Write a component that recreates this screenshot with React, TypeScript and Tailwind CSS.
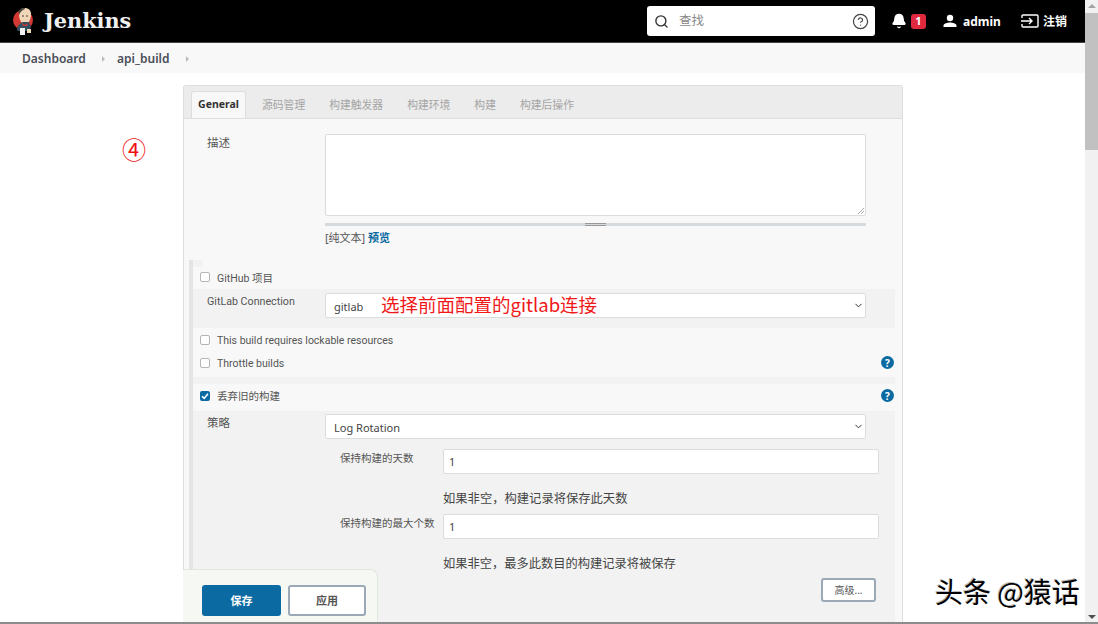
import { Search, CircleHelp, Bell, ChevronDown } from 'lucide-react'

const tabs = ['源码管理', '构建触发器', '构建环境', '构建', '构建后操作']

function HelpDot() {
  return (
    <span className="flex h-[13px] w-[13px] items-center justify-center rounded-full bg-[#0b6aa2] text-[10px] font-bold leading-none text-white">
      ?
    </span>
  )
}

function Check({ checked }: { checked?: boolean }) {
  if (checked) {
    return (
      <span className="-mt-[2px] flex h-[10px] w-[10px] items-center justify-center rounded-[2px] bg-[#0b6aa2]">
        <svg viewBox="0 0 10 10" className="h-[10px] w-[10px]" fill="none" stroke="white" strokeWidth="1.6">
          <path d="M2 5.2 4.2 7.4 8 2.8" />
        </svg>
      </span>
    )
  }
  return <span className="-mt-[2px] block h-[10px] w-[10px] rounded-[2px] border border-[#b5b5b5] bg-white" />
}

function CheckRow({ label, checked, help, className }: { label: string; checked?: boolean; help?: boolean; className: string }) {
  return (
    <div className={`flex items-center pl-[7px] pr-[1px] ${className}`}>
      <Check checked={checked} />
      <span className="ml-[7px] flex-1 pt-[1px] font-['Roboto','Noto_Sans_CJK_SC',sans-serif] text-[10.5px] text-[#555]">{label}</span>
      {help && <span className="-mt-[2px]"><HelpDot /></span>}
    </div>
  )
}

function Select({ value, className }: { value: string; className: string }) {
  return (
    <div className={`flex h-[25px] items-center justify-between rounded-[2px] border border-[#dcdcdc] bg-white pl-2 pr-[1px] text-[11px] text-[#444] ${className}`}>
      <span className="pt-1">{value}</span>
      <ChevronDown size={11} strokeWidth={2} className="text-[#222]" />
    </div>
  )
}

function Logo() {
  return (
    <svg viewBox="0 0 24 30" className="h-[30px] w-[24px]">
      <circle cx="11" cy="14" r="10" fill="#d33833" />
      <path d="M7 8c0-4 3-6 6-6s6 2 6 6c0 3-1 6-2 8l-7 1c-2-2-3-5-3-9z" fill="#f0d6b7" />
      <path d="M7 9c-1-4 1-7 5-7 2 0 1 1-1 2-2 1-3 3-4 5z" fill="#49483f" />
      <circle cx="11" cy="10" r=".8" fill="#333" />
      <circle cx="15" cy="10" r=".8" fill="#333" />
      <path d="M5 24c0-4 3-7 6-8h6l2 5-2 4H6z" fill="#335061" />
      <path d="M10 17l3 2 3-2-1 3h-4z" fill="#d33833" />
      <path d="M8 22h5v7H8z" fill="#f2f2f2" />
      <path d="M15 23h4v4h-4z" fill="#f0d6b7" />
    </svg>
  )
}

function UserIcon() {
  return (
    <svg viewBox="0 0 16 16" className="ml-[16px] h-[16px] w-[16px]" fill="white">
      <circle cx="8" cy="5" r="3.2" />
      <path d="M1.5 14v-1.2C1.5 10.4 5.5 9.6 8 9.6s6.500.8 6.500 3.200V14z" />
    </svg>
  )
}

function SignOutIcon() {
  return (
    <svg viewBox="0 0 18 14" className="ml-[20px] h-[14px] w-[18px]" fill="none" stroke="white" strokeWidth="1.4">
      <path d="M1 4V2a1 1 0 0 1 1-1h14a1 1 0 0 1 1 1v10a1 1 0 0 1-1 1H2a1 1 0 0 1-1-1v-2" />
      <path d="M0 7h11M8 4l3 3-3 3" />
    </svg>
  )
}

export default function App() {
  return (
    <div className="relative flex h-[624px] w-[1098px] overflow-hidden bg-white font-['Noto_Sans','Noto_Sans_CJK_SC',sans-serif]">
      <div className="flex w-[1085px] flex-col">
        <header className="flex h-[43px] shrink-0 items-center border-b border-[#444] bg-black pl-[12px]">
          <Logo />
          <span className="ml-[8px] w-[88px] font-['DejaVu_Serif',serif] text-[20.8px] font-bold leading-none text-[#f0f0f0]">
            Jenkins
          </span>
          <div className="ml-[515px] flex h-[30px] w-[228px] items-center rounded-[3px] bg-white pl-[7px] pr-[6px]">
            <Search size={15} strokeWidth={2.2} className="text-[#333]" />
            <span className="ml-[10px] flex-1 pt-[1px] text-[12.5px] text-[#888]">查找</span>
            <CircleHelp size={17} strokeWidth={1.7} className="text-[#444]" />
          </div>
          <Bell size={16} fill="white" className="ml-[16px] text-white" />
          <span className="ml-[4px] flex h-[15px] w-[15px] items-center justify-center rounded-[3px] bg-[#e0293e] text-[11px] font-bold text-white">
            1
          </span>
          <UserIcon />
          <span className="ml-[5px] pt-[1px] text-[12px] font-bold text-white">admin</span>
          <SignOutIcon />
          <span className="ml-[4px] pt-[1px] text-[12px] font-bold text-white">注销</span>
        </header>

        <nav className="flex h-[30px] shrink-0 items-center bg-[#f8f8f8] pl-[22px] pt-[2px] text-[12px] font-semibold text-[#4a4d57]">
          <span className="w-[62px]">Dashboard</span>
          <span className="ml-[18px] h-0 w-0 border-y-[3px] border-l-[3px] border-y-transparent border-l-[#bbb]" />
          <span className="ml-[12px]">api_build</span>
          <span className="ml-[17px] h-0 w-0 border-y-[3px] border-l-[3px] border-y-transparent border-l-[#bbb]" />
        </nav>

        <main className="flex-1 overflow-hidden pl-[183px] pt-[12px]">
          <div className="w-[720px] rounded-t-[3px] border border-b-0 border-[#dedede] bg-[#f8f8f8] pb-10">
            <div className="flex h-[33px] items-end border-b border-[#dedede] bg-[#ececec] pl-[7px]">
              <span className="mr-[16px] flex h-[27px] w-[55px] items-center justify-center rounded-t-[3px] border border-b-0 border-[#dedede] bg-[#f8f8f8] pb-[1px] text-[10.500px] font-bold text-[#333]">
                General
              </span>
              <div className="flex gap-[24px]">
                {tabs.map(t => (
                  <span key={t} className="flex h-[27px] items-center pt-[2px] text-[10.800px] text-[#a5a5a5]">
                    {t}
                  </span>
                ))}
              </div>
            </div>

            <div className="flex pl-[23px] pt-[15px]">
              <span className="w-[118px] text-[11.5px] text-[#555]">描述</span>
              <div>
                <div className="relative h-[82px] w-[541px] rounded-[2px] border border-[#dcdcdc] bg-white">
                  <svg viewBox="0 0 6 6" className="absolute bottom-[1px] right-[1px] h-[6px] w-[6px]" stroke="#888" strokeWidth=".7">
                    <path d="M0 6 6 0M3 6 6 3" />
                  </svg>
                </div>
                <div className="mt-[7px] flex h-[3px] w-[541px] justify-center bg-[#d5dade]">
                  <span className="h-[3px] w-[21px] border-y border-[#999]" />
                </div>
                <p className="mt-[4px] text-[11px] leading-[16px] text-[#555]">
                  [纯文本] <span className="font-bold text-[#0b6aa2]">预览</span>
                </p>
              </div>
            </div>

            <section className="ml-[5px] mt-[14px] w-[706px] border-l-[4px] border-[#e4e4e4]">
              <div className="h-[7px] w-[10px] bg-[#f2f2f2]" />
              <CheckRow label="GitHub 项目" className="h-[22px]" />
              <div className="flex h-[39px] bg-[#f2f2f2] pl-[14px] pt-[5px]">
                <span className="w-[118px] font-['Roboto',sans-serif] text-[10.7px] text-[#555]">GitLab Connection</span>
                <Select value="gitlab" className="-mt-[1px] w-[541px]" />
              </div>
              <CheckRow label="This build requires lockable resources" className="mt-[1px] h-[23px]" />
              <CheckRow label="Throttle builds" help className="h-[23px]" />
              <div className="mt-[2px] h-[7px] bg-[#f2f2f2]" />
              <CheckRow label="丢弃旧的构建" checked help className="h-[27px] pb-[2px]" />
              <div className="bg-[#f2f2f2] pb-[24px] pl-[14px] pt-[3px]">
                <div className="flex">
                  <span className="w-[118px] text-[11.5px] text-[#555]">策略</span>
                  <Select value="Log Rotation" className="w-[541px]" />
                </div>
                <div className="mt-[10px] flex">
                  <span className="ml-[133px] w-[103px] pt-[2px] text-[10.5px] text-[#555]">保持构建的天数</span>
                  <div className="flex h-[25px] w-[436px] items-center rounded-[2px] border border-[#dcdcdc] bg-white pl-[5px] pt-[1px] text-[11px] text-[#444]">1</div>
                </div>
                <p className="ml-[236px] mt-[15px] text-[12.3px] leading-[20px] text-[#444]">如果非空，构建记录将保存此天数</p>
                <div className="mt-[5px] flex">
                  <span className="ml-[133px] w-[103px] pt-[2px] text-[10.5px] text-[#555]">保持构建的最大个数</span>
                  <div className="flex h-[25px] w-[436px] items-center rounded-[2px] border border-[#dcdcdc] bg-white pl-[5px] pt-[1px] text-[11px] text-[#444]">1</div>
                </div>
                <p className="ml-[236px] mt-[15px] text-[12.25px] leading-[20px] text-[#444]">如果非空，最多此数目的构建记录将被保存</p>
                <div className="mr-[19px] mt-[4px] flex justify-end">
                  <span className="flex h-[24px] w-[55px] items-center justify-center rounded-[3px] border-2 border-[#9aa9b5] bg-white text-[10px] text-[#555]">
                    高级...
                  </span>
                </div>
              </div>
            </section>
          </div>
        </main>
      </div>

      <aside className="flex w-[13px] flex-col bg-[#f1f1f1]">
        <span className="mx-auto mt-[4px] h-0 w-0 border-x-[4px] border-b-[4px] border-x-transparent border-b-[#a3a3a3]" />
        <span className="mt-[5px] h-[137px] w-full bg-[#c1c1c1]" />
        <span className="mx-auto mb-[5px] mt-auto h-0 w-0 border-x-[4px] border-t-[4px] border-x-transparent border-t-[#505050]" />
      </aside>

      {/* annotations and sticky bar sit over the page */}
      <span className="absolute left-[122px] top-[135px] text-[24px] leading-[30px] text-[#f01010]">④</span>
      <span className="absolute left-[381px] top-[291px] font-['Noto_Sans_CJK_SC','Liberation_Sans',sans-serif] text-[18.5px] leading-[27px] text-[#f01818]">
        选择前面配置的gitlab连接
      </span>

      <div className="absolute bottom-0 left-[183px] flex h-[55px] w-[195px] gap-[7px] rounded-tr-[8px] border-r border-t border-[#dfe8df] bg-[#f5f8f3] pl-[19px] pt-[15px]">
        <span className="flex h-[31px] w-[79px] items-center justify-center rounded-[3px] bg-[#0b6aa2] pt-[1px] text-[11px] font-bold text-white">保存</span>
        <span className="flex h-[31px] w-[78px] items-center justify-center rounded-[3px] border-2 border-[#9aa9b5] bg-white pt-[1px] text-[11px] font-bold text-[#555]">应用</span>
      </div>

      <span className="absolute left-[935px] top-[574px] whitespace-nowrap font-['Noto_Sans_CJK_SC',sans-serif] text-[28px] leading-[34px] text-black [text-shadow:1px_1px_0_#fff,-1px_-1px_0_#bbb]">
        头条 @猿话
      </span>
      <div className="absolute bottom-0 left-0 h-[2px] w-full bg-[#8c8c8c]" />
    </div>
  )
}
